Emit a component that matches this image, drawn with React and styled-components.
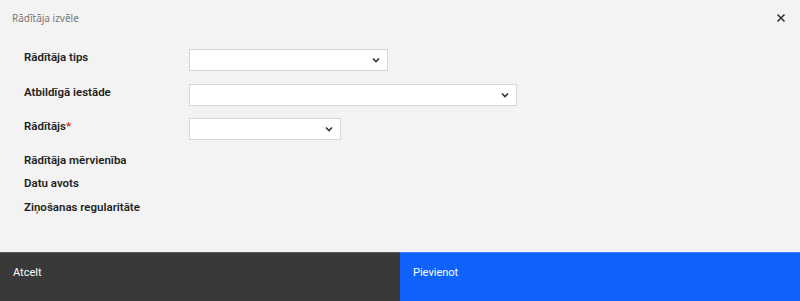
import React from "react";
import styled, { createGlobalStyle } from "styled-components";

const GlobalStyle = createGlobalStyle`
  html, body {
    margin: 0;
    padding: 0;
    background: #f3f3f3;
    font-family: "Noto Sans", "Open Sans", sans-serif;
  }
`;

const Modal = styled.div`
  display: flex;
  flex-direction: column;
  width: 800px;
  height: 301px;
  background: #f3f3f3;
`;

const Header = styled.div`
  display: flex;
  justify-content: space-between;
  align-items: center;
  height: 36px;
  padding: 0 14px 0 12px;
`;

const Title = styled.span`
  font-size: 10px;
  color: #777;
`;

const Close = styled.button`
  display: flex;
  border: 0;
  padding: 0;
  background: none;
  cursor: pointer;
`;

const Body = styled.div`
  flex: 1;
  display: flex;
  flex-direction: column;
  padding: 13px 0 0 24px;
`;

const Row = styled.div`
  display: grid;
  grid-template-columns: 165px auto;
  align-items: start;
  height: ${p => (p.$field ? "34.5px" : "23.5px")};
`;

const Label = styled.label`
  font-family: "Roboto", "Noto Sans", sans-serif;
  font-size: 11.5px;
  font-weight: 600;
  color: #1f1f1f;
  line-height: ${p => (p.$field ? "16px" : "14px")};
`;

const Req = styled.span`
  color: #da1e28;
`;

const SelectBox = styled.div`
  box-sizing: border-box;
  display: flex;
  align-items: center;
  justify-content: flex-end;
  width: ${p => p.$w}px;
  height: 22px;
  padding-right: 6px;
  background: #fff;
  border: 1px solid #d6d6d6;
`;

const Footer = styled.div`
  display: grid;
  grid-template-columns: 1fr 1fr;
  height: 49px;
`;

const Action = styled.button`
  border: 0;
  margin: 0;
  padding: 13px 13px 0;
  display: flex;
  align-items: flex-start;
  font-family: "Roboto", "Noto Sans", sans-serif;
  font-size: 11px;
  color: #fff;
  background: ${p => (p.$primary ? "#0f62fe" : "#393939")};
  border-top: 1px solid ${p => (p.$primary ? "#3d7efe" : "#555")};
  cursor: pointer;
`;

const Chevron = () => (
  <svg width="10" height="10" viewBox="0 0 10 10">
    <path d="M2 3.5 L5 6.5 L8 3.5" fill="none" stroke="#333" strokeWidth="1.6" />
  </svg>
);

const fields = [
  { label: "Rādītāja tips", w: 199 },
  { label: "Atbildīgā iestāde", w: 328 },
  { label: "Rādītājs", w: 152, required: true }
];

const infos = ["Rādītāja mērvienība", "Datu avots", "Ziņošanas regularitāte"];

export default function App() {
  return (
    <Modal>
      <GlobalStyle />
      <Header>
        <Title>Rādītāja izvēle</Title>
        <Close aria-label="close">
          <svg width="10" height="10" viewBox="0 0 10 10">
            <path d="M1.5 1.5 L8.5 8.5 M8.5 1.5 L1.5 8.5" stroke="#333" strokeWidth="1.6" />
          </svg>
        </Close>
      </Header>
      <Body>
        {fields.map(f => (
          <Row key={f.label} $field>
            <Label $field>
              {f.label}
              {f.required && <Req>*</Req>}
            </Label>
            <SelectBox $w={f.w}>
              <Chevron />
            </SelectBox>
          </Row>
        ))}
        {infos.map(t => (
          <Row key={t}>
            <Label>{t}</Label>
          </Row>
        ))}
      </Body>
      <Footer>
        <Action>Atcelt</Action>
        <Action $primary>Pievienot</Action>
      </Footer>
    </Modal>
  );
}
